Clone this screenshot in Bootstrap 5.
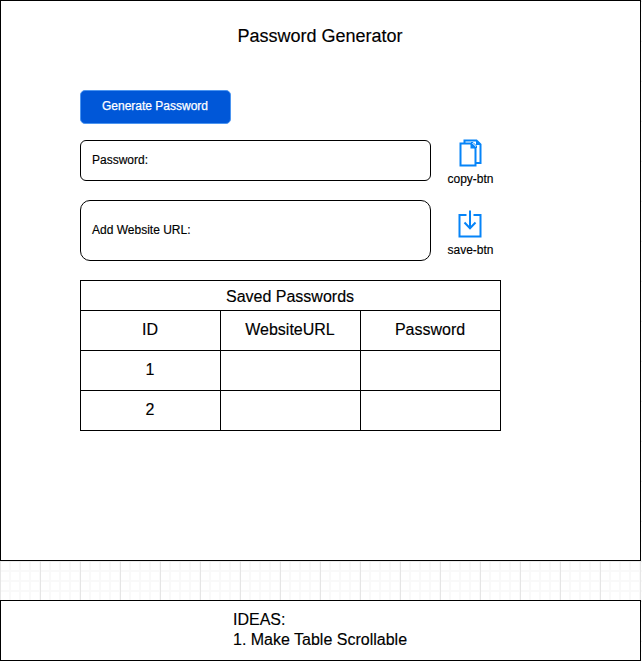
<!DOCTYPE html>
<html lang="en">
<head>
<meta charset="utf-8">
<meta name="viewport" content="width=device-width, initial-scale=1">
<title>Password Generator</title>
<link href="https://cdn.jsdelivr.net/npm/bootstrap@5.3.0/dist/css/bootstrap.min.css" rel="stylesheet">
<style>
body{font-family:"Liberation Sans",Arial,sans-serif;color:#000;font-size:12px;line-height:14px;overflow:hidden;height:661px;-webkit-text-stroke:.15px currentColor;
 background-color:#fff;
 background-image:linear-gradient(90deg,#e5e5e5 1px,transparent 1px),linear-gradient(#ececec 1px,transparent 1px),linear-gradient(90deg,#f9f9f9 2px,transparent 2px),linear-gradient(#f9f9f9 2px,transparent 2px);
 background-size:40px 40px,40px 40px,10px 10px,10px 10px;background-position:0 0,0 1px,-1px 0,0 0}
.frame{width:641px;background:#fff;border:1px solid #000}
.screen{height:561px;padding:0 79px}
.title{font-size:18px;line-height:22px;padding:24px 1px 0 0;margin-bottom:43px}
.btn-generate{width:151px;height:34px;font-size:12px;line-height:14px;padding:0 1px 2px 0;color:#fff;background:#0057d8;border:1px solid #4c95f0;border-radius:5px;-webkit-text-stroke:.25px #fff}
.btn-generate:hover{color:#fff;background:#004fc4}
.entry{width:351px;border:1px solid #000;padding:0 11px 2px}
.entry-password{height:41px;border-radius:6px}
.entry-url{height:61px;border-radius:10px}
.row-password{height:41px}
.row-url{height:61px;margin:19px 0}
.action{width:78px;gap:5px}
.row-password .action{margin-top:-1px}
.row-url .action{margin-top:10px}
.action svg{display:block;flex:none}
.action span{padding-left:1px}
.grid{width:421px;table-layout:fixed;border-collapse:collapse;font-size:16px;line-height:20px;color:#000}
.grid th,.grid td{border:1px solid #000;height:40px;padding:0 1px 2px 0;text-align:center;vertical-align:middle;font-weight:400}
.grid .heading th{height:30px;padding:2px 1px 0 0}
.ideas{height:61px;margin-top:39px;padding:9px 0 0 232px;font-size:16px;line-height:20px}
</style>
</head>
<body>
<main class="frame screen">
  <h1 class="title text-center fw-normal">Password Generator</h1>
  <button type="button" class="btn btn-generate d-block">Generate Password</button>
  <div class="row-password d-flex align-items-start mt-3">
    <label class="entry entry-password d-flex align-items-center">Password:</label>
    <div class="action d-flex flex-column align-items-center">
      <svg width="24" height="28" viewBox="0 0 24 28" fill="none" stroke="#0684f8" stroke-width="2"><path d="M6.500 4V1.500H18.500L22.500 5.500V24H18"/><path d="M2.500 4.500H13L17.500 9V26.500H2.500z" fill="#fff"/><path d="M12.500 4.500l5 5h-5zM18 1.500l4.500 4.500H18z" fill="#0684f8" stroke="none"/><path d="M13 3.500h2l3.500 3.500v2" stroke-width="1"/></svg>
      <span>copy-btn</span>
    </div>
  </div>
  <div class="row-url d-flex align-items-start">
    <label class="entry entry-url d-flex align-items-center">Add Website URL:</label>
    <div class="action d-flex flex-column align-items-center">
      <svg width="24" height="28" viewBox="0 0 24 28" fill="none" stroke="#0684f8" stroke-width="2"><path d="M8.500 5H1.500v21.500h21V5h-7M12 .5v18M6.500 12.500l5.500 5.700 5.500-5.700"/></svg>
      <span>save-btn</span>
    </div>
  </div>
  <table class="grid">
    <thead>
      <tr class="heading"><th colspan="3">Saved Passwords</th></tr>
      <tr><th>ID</th><th>WebsiteURL</th><th>Password</th></tr>
    </thead>
    <tbody>
      <tr><td>1</td><td></td><td></td></tr>
      <tr><td>2</td><td></td><td></td></tr>
    </tbody>
  </table>
</main>
<section class="frame ideas">
  <div>IDEAS:</div>
  <div>1. Make Table Scrollable</div>
</section>
<script src="https://cdn.jsdelivr.net/npm/bootstrap@5.3.0/dist/js/bootstrap.bundle.min.js"></script>
</body>
</html>
